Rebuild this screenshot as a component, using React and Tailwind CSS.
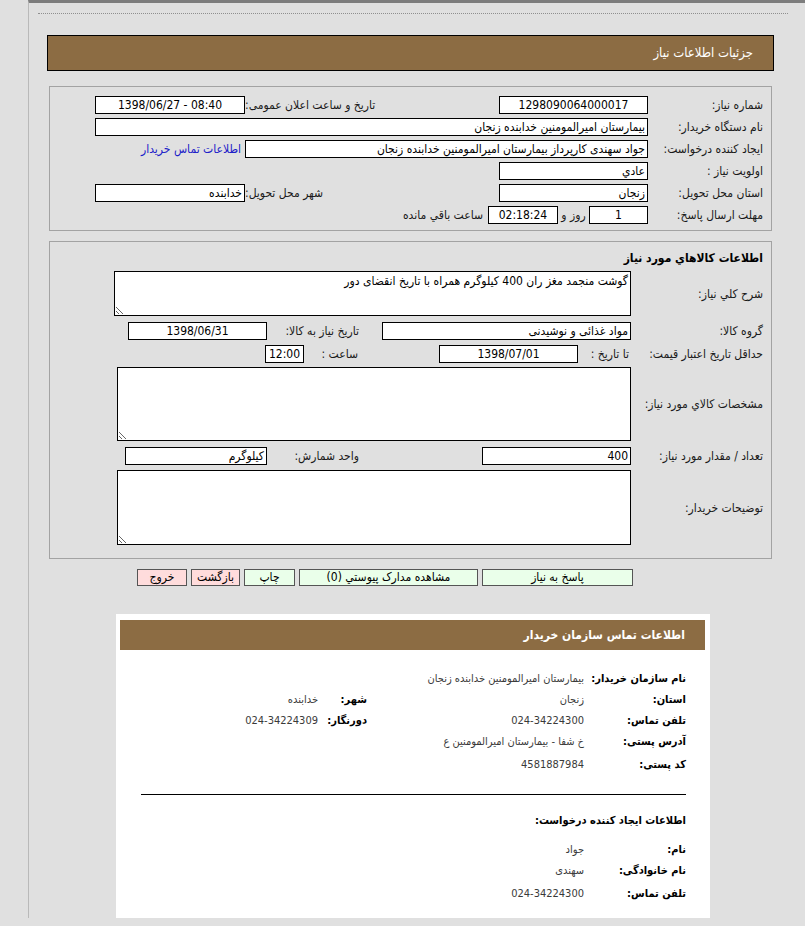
import clsx from 'clsx'

const box = 'h-[18px] shrink-0 overflow-hidden whitespace-nowrap border border-black bg-white px-[2px] text-[12px] leading-[16px] text-black'
const areaClass = 'block shrink-0 resize border border-black bg-white px-[2px] py-[1px] text-[12px] leading-[16px] text-black outline-none'

function Box({ className, center, ltr, children }) {
  return <div dir={ltr ? 'ltr' : undefined} className={clsx(box, center && 'text-center', className)}>{children}</div>
}

function Label({ className, children }) {
  return <div className={clsx('shrink-0 whitespace-nowrap text-[12px] leading-[18px] text-[#1a1a1a]', className)}>{children}</div>
}

function Row({ className, children }) {
  return <div className={clsx('flex h-[18px] items-center', className)}>{children}</div>
}

function InfoRow({ label, value, label2, value2, className }) {
  return (
    <div className={clsx('flex h-[21px] items-center text-[11px] leading-[21px]', className)}>
      <div className="w-[102px] shrink-0 font-bold text-black">{label}</div>
      <div className="w-[217px] shrink-0 whitespace-nowrap text-[#3a3a3a]">{value}</div>
      {label2 && <div className="w-[49px] shrink-0 font-bold text-black">{label2}</div>}
      {value2 && <div className="whitespace-nowrap text-[#3a3a3a]">{value2}</div>}
    </div>
  )
}

export default function App() {
  return (
    <div className="min-h-[926px] bg-[#e0e0e0] font-['DejaVu_Sans_Condensed','DejaVu_Sans',sans-serif]">
      <div className="flex">
        <div className="w-[28px] shrink-0" />
        <div className="flex-1 border-l border-[#b9b9b9] border-t-[3px] border-t-[#7d7d7d]">
          <div className="ml-[9px] mr-[17px] mt-[10px] border-t border-dotted border-[#8f8f8f]" />

          <div dir="rtl" className="ml-[18px] mr-[31px] mt-[21px] flex h-[36px] items-center border border-black bg-[#8c6c43] pr-[20px] text-[13px] text-white">
            جزئیات اطلاعات نیاز
          </div>

          {/* اطلاعات اصلی */}
          <div dir="rtl" className="ml-[20px] mr-[33px] mt-[15px] flex flex-col gap-[4px] border border-[#a3a3a3] pb-[6px] pl-[10px] pr-[8px] pt-[9px]">
            <Row>
              <Label className="w-[115px]">شماره نیاز:</Label>
              <Box center className="w-[149px]">1298090064000017</Box>
              <div className="w-[106px] shrink-0" />
              <Label className="w-[148px] text-left">تاریخ و ساعت اعلان عمومی:</Label>
              <Box center ltr className="w-[150px]">1398/06/27 - 08:40</Box>
            </Row>
            <Row>
              <Label className="w-[115px]">نام دستگاه خریدار:</Label>
              <Box className="w-[553px]">بیمارستان امیرالمومنین خدابنده زنجان</Box>
            </Row>
            <Row>
              <Label className="w-[115px]">ایجاد کننده درخواست:</Label>
              <Box className="w-[403px]">جواد سهندی کارپرداز بیمارستان امیرالمومنین خدابنده زنجان</Box>
              <a href="#" className="whitespace-nowrap pr-[4px] text-[12px] text-[#2020c8]">اطلاعات تماس خریدار</a>
            </Row>
            <Row>
              <Label className="w-[115px]">اولویت نیاز :</Label>
              <Box className="w-[149px]">عادي</Box>
            </Row>
            <Row>
              <Label className="w-[115px]">استان محل تحویل:</Label>
              <Box className="w-[149px]">زنجان</Box>
              <div className="w-[106px] shrink-0" />
              <Label className="w-[148px] text-left">شهر محل تحویل:</Label>
              <Box className="w-[150px]">خدابنده</Box>
            </Row>
            <Row>
              <Label className="w-[115px]">مهلت ارسال پاسخ:</Label>
              <Box center className="w-[59px]">1</Box>
              <Label className="w-[31px] text-center">روز و</Label>
              <Box center className="w-[70px]">02:18:24</Box>
              <Label className="pr-[5px]">ساعت باقي مانده</Label>
            </Row>
          </div>

          {/* اطلاعات کالا */}
          <div dir="rtl" className="ml-[20px] mr-[33px] mt-[10px] flex flex-col border border-[#a3a3a3] pb-[13px] pl-[10px] pr-[8px] pt-[8px]">
            <div className="text-[12px] font-bold leading-[16px] text-black">اطلاعات كالاهاي مورد نياز</div>
            <div className="mt-[5px] flex items-center">
              <Label className="w-[132px]">شرح کلي نیاز:</Label>
              <textarea readOnly className={clsx(areaClass, 'h-[45px] w-[517px]')} defaultValue="گوشت منجمد مغز ران 400 کیلوگرم همراه با تاریخ انقضای دور" />
            </div>
            <Row className="mt-[6px]">
              <Label className="w-[132px]">گروه کالا:</Label>
              <Box className="w-[249px]">مواد غذائی و نوشیدنی</Box>
              <Label className="w-[115px] pr-[23px]">تاریخ نیاز به کالا:</Label>
              <Box center className="w-[139px]">1398/06/31</Box>
            </Row>
            <Row className="mt-[5px]">
              <Label className="w-[132px]">حداقل تاریخ اعتبار قیمت:</Label>
              <Label className="w-[53px] pr-[2px]">تا تاریخ :</Label>
              <Box center className="w-[139px]">1398/07/01</Box>
              <Label className="w-[135px] pr-[81px]">ساعت :</Label>
              <Box center className="w-[39px]">12:00</Box>
            </Row>
            <div className="mt-[4px] flex items-center">
              <Label className="w-[132px]">مشخصات كالاي مورد نیاز:</Label>
              <textarea readOnly className={clsx(areaClass, 'h-[74px] w-[514px]')} defaultValue="" />
            </div>
            <Row className="mt-[6px]">
              <Label className="w-[132px]">تعداد / مقدار مورد نیاز:</Label>
              <Box className="w-[149px]">400</Box>
              <Label className="w-[215px] pr-[123px]">واحد شمارش:</Label>
              <Box className="w-[142px]">کیلوگرم</Box>
            </Row>
            <div className="mt-[5px] flex items-center">
              <Label className="w-[132px]">توضیحات خریدار:</Label>
              <textarea readOnly className={clsx(areaClass, 'h-[75px] w-[514px]')} defaultValue="" />
            </div>
          </div>

          {/* دکمه‌ها */}
          <div dir="rtl" className="mt-[10px] flex gap-[4px] pr-[172px] text-[12px] leading-[15px] text-black">
            <button className="h-[17px] w-[151px] border border-[#555] bg-[#eaffea]">پاسخ به نیاز</button>
            <button className="h-[17px] w-[179px] border border-[#555] bg-[#eaffea]">مشاهده مدارک پیوستي (0)</button>
            <button className="h-[17px] w-[51px] border border-[#555] bg-[#eaffea]">چاپ</button>
            <button className="h-[17px] w-[49px] overflow-hidden whitespace-nowrap border border-[#555] bg-[#ffdcdc]">بازگشت</button>
            <button className="h-[17px] w-[50px] border border-[#555] bg-[#ffdcdc]">خروج</button>
          </div>

          {/* اطلاعات تماس */}
          <div dir="rtl" className="ml-[87px] mt-[28px] w-[594px] bg-white pb-[14px] pt-[6px]">
            <div className="ml-[4px] mr-[5px] flex h-[30px] items-center bg-[#8c6c43] pr-[20px] text-[12px] font-bold text-white">
              اطلاعات تماس سازمان خریدار
            </div>
            <div className="pl-[25px] pr-[24px]">
              <div className="mt-[18px]">
                <InfoRow label="نام سازمان خریدار:" value="بیمارستان امیرالمومنین خدابنده زنجان" />
                <InfoRow label="استان:" value="زنجان" label2="شهر:" value2="خدابنده" />
                <InfoRow label="تلفن تماس:" value="024-34224300" label2="دورنگار:" value2="024-34224309" />
                <InfoRow label="آدرس پستی:" value="خ شفا - بیمارستان امیرالمومنین ع" />
                <InfoRow label="کد پستی:" value="4581887984" className="mt-[2px]" />
              </div>
              <div className="mt-[19px] border-t border-black" />
              <div className="mt-[16px] h-[20px] text-[11px] font-bold leading-[20px] text-black">اطلاعات ایجاد کننده درخواست:</div>
              <div className="mt-[8px]">
                <InfoRow label="نام:" value="جواد" />
                <InfoRow label="نام خانوادگی:" value="سهندی" />
                <InfoRow label="تلفن تماس:" value="024-34224300" className="mt-[2px]" />
              </div>
            </div>
          </div>
        </div>
      </div>
    </div>
  )
}
